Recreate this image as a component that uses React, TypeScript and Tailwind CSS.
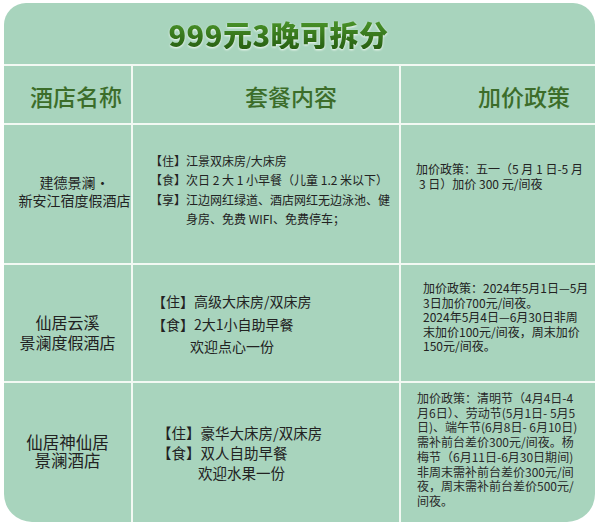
const line = "border-[#f2f9f3]"

function Cell({ className = "", lines, indent }: { className?: string; lines: string[]; indent?: Record<number, string> }) {
  return (
    <div className={`flex flex-col ${className}`}>
      <p className="whitespace-nowrap">
        {lines.map((t, i) => (
          <span key={i}>
            {i > 0 && <br />}
            {indent && indent[i] ? <span className={`inline-block ${indent[i]}`}>{t}</span> : t}
          </span>
        ))}
      </p>
    </div>
  )
}

export default function App() {
  return (
    <div className="w-[600px] h-[523px] bg-white pt-[3px] pl-[4px] font-['Noto_Sans_CJK_SC',sans-serif] text-[#222]">
      <div className="w-[591px] h-[519px] bg-[#a8d4bd] rounded-t-[22px] rounded-b-[28px] overflow-hidden">
        {/* title */}
        <div className="h-[61px] flex items-center justify-center pr-[42px] pt-[2px]">
          <span className="text-[29px] leading-none font-black tracking-[0.5px] bg-linear-to-b from-[#4b952a] to-[#275f12] bg-clip-text text-transparent drop-shadow-[0_1px_1px_rgba(255,255,255,0.9)]">
            999元3晚可拆分
          </span>
        </div>

        {/* header */}
        <div className={`grid grid-cols-[127px_268px_196px] h-[59px] border-t-2 ${line} text-[23px] font-medium text-[#3c6d2a]`}>
          <div className="flex items-center pl-[26px] pt-[4px]">酒店名称</div>
          <div className={`flex items-center pl-[112px] pt-[4px] border-l-2 ${line}`}>套餐内容</div>
          <div className={`flex items-center pl-[77px] pt-[4px] border-l-2 ${line}`}>加价政策</div>
        </div>

        {/* row 1 */}
        <div className={`grid grid-cols-[127px_268px_196px] h-[140px] border-t-2 ${line}`}>
          <Cell
            className="items-center justify-center text-center text-[14px] leading-[18px] pl-[14px] pb-[6px]"
            lines={["建德景澜·", "新安江宿度假酒店"]}
          />
          <Cell
            className={`justify-center pl-[17px] pb-[9px] text-[12px] leading-[19.5px] border-l-2 ${line}`}
            lines={[
              "【住】江景双床房/大床房",
              "【食】次日 2 大 1 小早餐（儿童 1.2 米以下）",
              "【享】江边网红绿道、酒店网红无边泳池、健",
              "身房、免费 WIFI、免费停车；",
            ]}
            indent={{ 3: "pl-[36px]" }}
          />
          <Cell
            className={`pl-[15px] pt-[37px] text-[12px] leading-[14.5px] border-l-2 ${line}`}
            lines={["加价政策：五一（5 月 1 日-5 月", "3 日）加价 300 元/间夜"]}
            indent={{ 1: "pl-[3px]" }}
          />
        </div>

        {/* row 2 */}
        <div className={`grid grid-cols-[127px_268px_196px] h-[118px] border-t-2 ${line}`}>
          <Cell
            className="items-center justify-center text-center text-[16px] leading-[20px] pt-[18px]"
            lines={["仙居云溪", "景澜度假酒店"]}
          />
          <Cell
            className={`justify-center pl-[19px] pt-[2px] text-[14px] leading-[22.5px] border-l-2 ${line}`}
            lines={["【住】高级大床房/双床房", "【食】2大1小自助早餐", "欢迎点心一份"]}
            indent={{ 2: "pl-[38px]" }}
          />
          <Cell
            className={`pl-[22px] pt-[16px] text-[12px] leading-[14.5px] border-l-2 ${line}`}
            lines={[
              "加价政策：2024年5月1日—5月",
              "3日加价700元/间夜。",
              "2024年5月4日—6月30日非周",
              "末加价100元/间夜，周末加价",
              "150元/间夜。",
            ]}
          />
        </div>

        {/* row 3 */}
        <div className={`grid grid-cols-[127px_268px_196px] h-[141px] border-t-2 ${line}`}>
          <Cell
            className="items-center justify-center text-center text-[16.5px] leading-[18.5px] pb-[3px]"
            lines={["仙居神仙居", "景澜酒店"]}
          />
          <Cell
            className={`justify-center pl-[24px] text-[14.5px] leading-[20px] border-l-2 ${line}`}
            lines={["【住】豪华大床房/双床房", "【食】双人自助早餐", "欢迎水果一份"]}
            indent={{ 2: "pl-[41px]" }}
          />
          <Cell
            className={`pl-[16px] pt-[8px] text-[12px] leading-[14.7px] text-[#2a2a2a] border-l-2 ${line}`}
            lines={[
              "加价政策：清明节（4月4日-4",
              "月6日）、劳动节(5月1日- 5月5",
              "日)、端午节(6月8日- 6月10日)",
              "需补前台差价300元/间夜。杨",
              "梅节（6月11日-6月30日期间)",
              "非周末需补前台差价300元/间",
              "夜，周末需补前台差价500元/",
              "间夜。",
            ]}
          />
        </div>
      </div>
    </div>
  )
}
